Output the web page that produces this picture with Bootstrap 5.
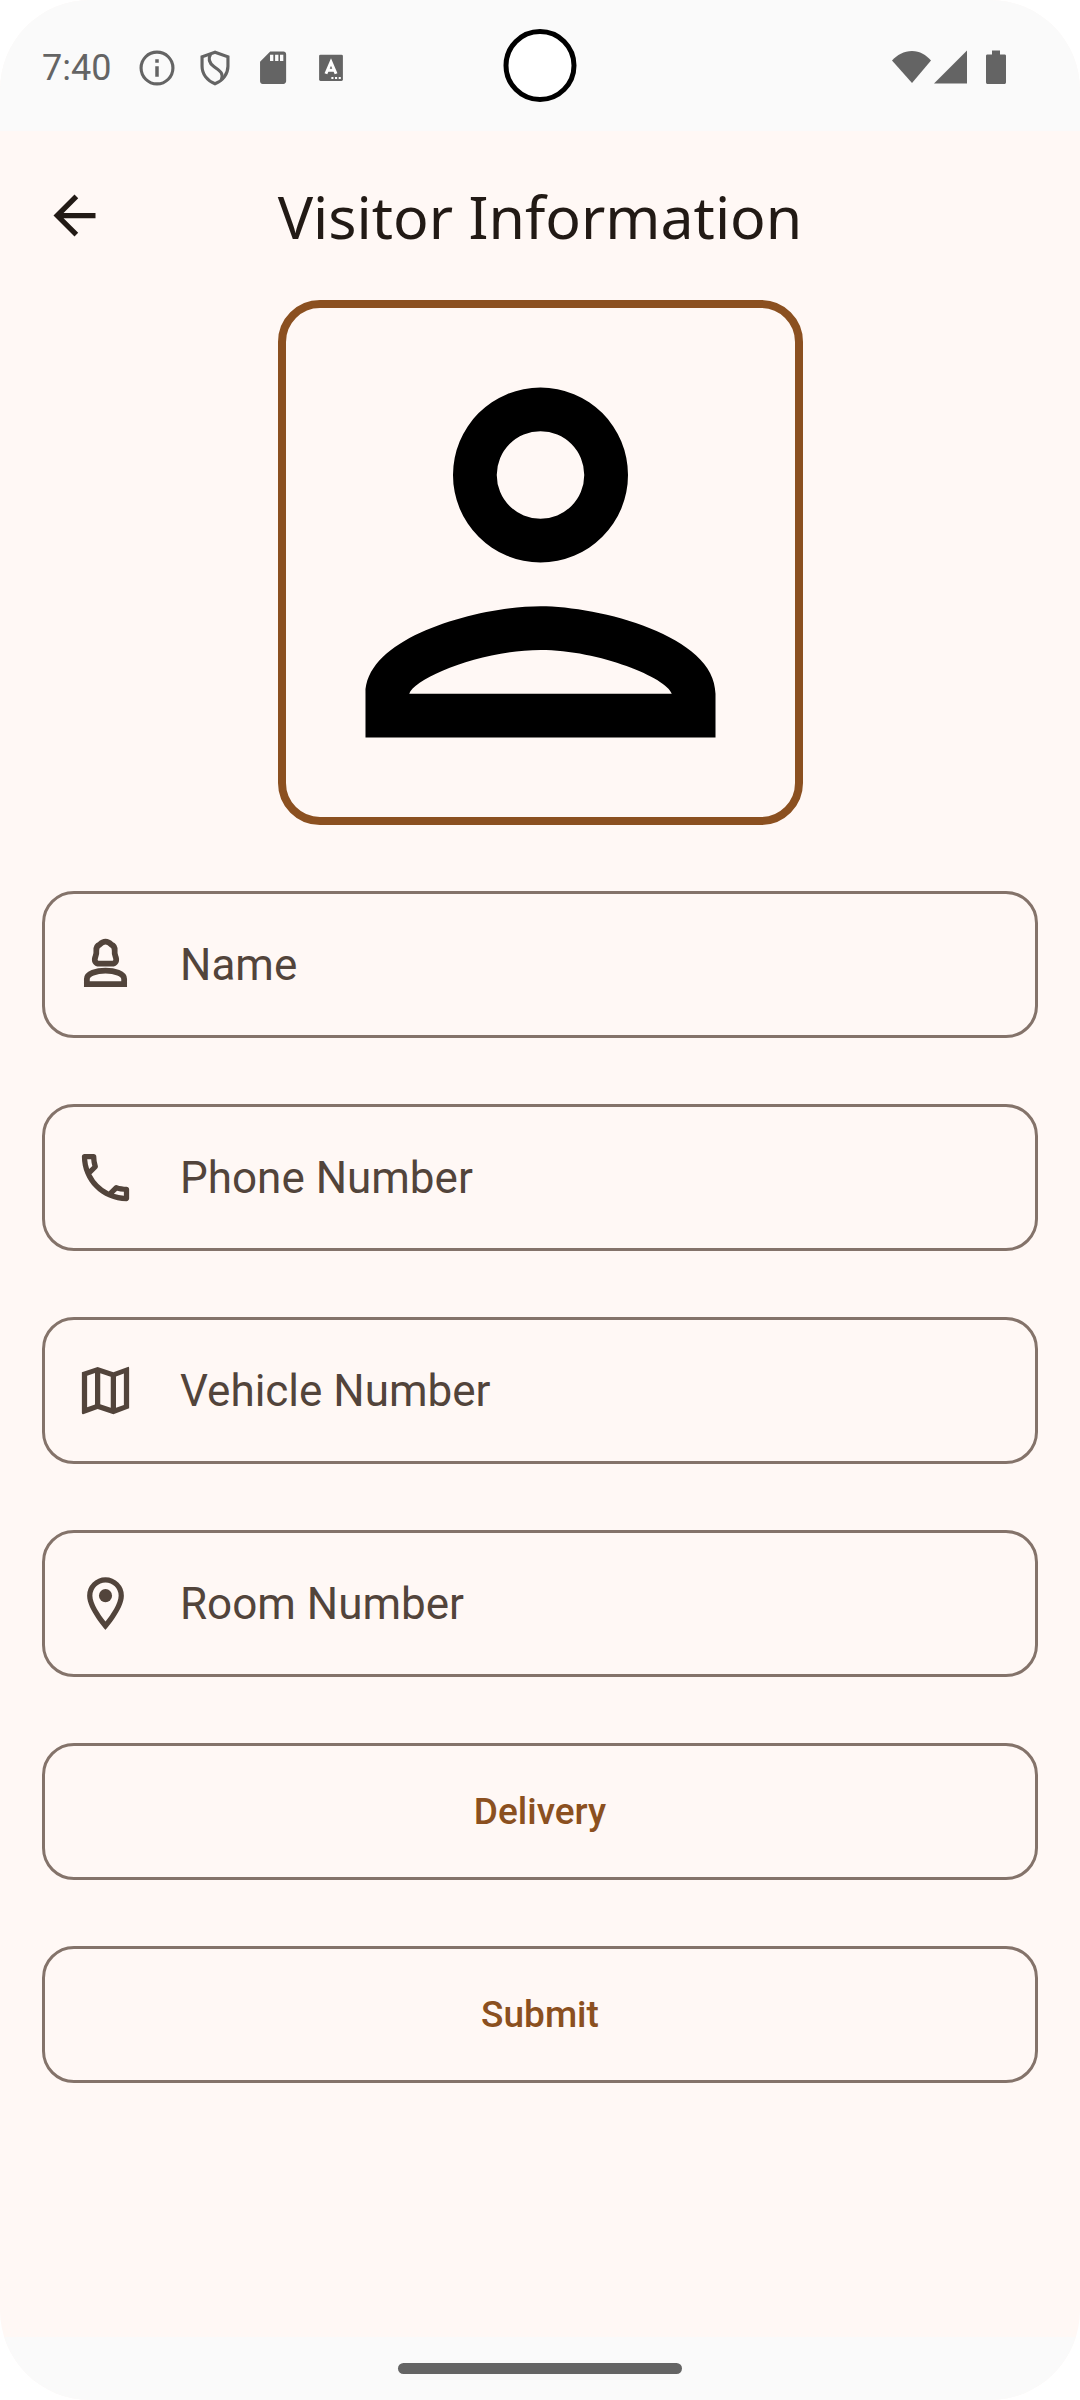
<!DOCTYPE html>
<html lang="en">
<head>
<meta charset="utf-8">
<meta name="viewport" content="width=device-width, initial-scale=1">
<title>Visitor Information</title>
<link href="https://cdn.jsdelivr.net/npm/bootstrap@5.3.0/dist/css/bootstrap.min.css" rel="stylesheet">
<style>
  :root {
    --surface: #fff8f5;
    --system: #fafafa;
    --system-ink: #646464;
    --ink: #221a15;
    --ink-soft: #52443b;
    --outline: #84736a;
    --accent: #8b5020;
  }
  body { background: #fff; font-family: Roboto, "Liberation Sans", sans-serif; color: var(--ink); }
  svg { display: block; flex: none; }
  .screen { background: var(--surface); border-radius: 90px; }
  .status-bar { height: 131px; padding: 4px 42px 0; background: var(--system); color: var(--system-ink); }
  .clock { font-size: 36px; line-height: 42px; }
  .status-icons { gap: 16px; margin-left: 25px; }
  .signal-icons { margin-right: 30px; }
  .camera { width: 73px; height: 73px; border: 5px solid #000; background: #fff; top: 29px; }
  .top-bar { height: 169px; padding: 0 43px; }
  .top-bar h1 { font-family: "Noto Sans", "Open Sans", sans-serif; font-size: 59px; line-height: 72px; }
  .back { width: 63px; height: 63px; color: var(--ink); }
  .content { padding: 0 42px; gap: 66px; }
  .photo { width: 525px; max-width: 100%; border: 8px solid var(--accent); border-radius: 42px; color: #000; }
  .photo svg { width: 100%; height: auto; }
  .outlined { border: 3px solid var(--outline); border-radius: 32px; }
  .field { height: 147px; padding: 0 29px; gap: 43px; color: var(--ink-soft); }
  .field:focus-within { border-color: var(--accent); }
  .field label, .field .form-control, .field .form-control:focus { font-size: 44px; line-height: 60px; }
  .field .form-control, .field .form-control:focus { color: var(--ink); box-shadow: none; }
  /* The label rests over the empty input and gives way once something is typed. */
  .field label { pointer-events: none; }
  .field .form-control:not(:placeholder-shown) + label { opacity: 0; }
  .action { height: 137px; font-size: 37px; line-height: 52px; color: var(--accent); }
  .action:hover { border-color: var(--accent); color: var(--accent); }
  .nav-area { height: 63px; background: var(--system); }
  .handle { width: 284px; height: 11px; background: var(--system-ink); }
</style>
</head>
<body>
<div class="screen d-flex flex-column min-vh-100 overflow-hidden position-relative">
  <div class="status-bar d-flex align-items-center">
    <span class="clock">7:40</span>
    <div class="status-icons d-flex align-items-center">
      <svg width="42" height="42" viewBox="0 0 24 24" fill="currentColor" aria-hidden="true"><path d="M11 7h2v2h-2zm0 4h2v6h-2zm1-9a10 10 0 1 0 0 20 10 10 0 0 0 0-20m0 18.2a8.2 8.2 0 1 1 0-16.4 8.2 8.2 0 0 1 0 16.4"/></svg>
      <svg width="42" height="42" viewBox="0 0 24 24" fill="none" stroke="currentColor" stroke-width="1.8" aria-hidden="true"><path d="M12 3 4.600 5.600V11c0 4.500 3 8.300 7.400 10 4.400-1.700 7.400-5.500 7.400-10V5.600z"/><path d="M9.500 4C7.800 7 8.700 9.300 11.500 11.300 14.800 13.700 17 14.700 15.700 18.700"/></svg>
      <svg width="42" height="42" viewBox="0 0 24 24" fill="currentColor" aria-hidden="true"><path fill-rule="evenodd" d="M18 2.600h-7.600L4.600 8.400v11.200c0 .9.700 1.500 1.500 1.500H18c.8 0 1.500-.7 1.500-1.500V4.100c0-.8-.7-1.500-1.500-1.500M12.200 8h-1.900V4.400h1.900zm2.900 0h-1.900V4.400h1.900zm2.800 0H16V4.400h1.900z"/></svg>
      <svg width="42" height="42" viewBox="0 0 24 24" aria-hidden="true"><rect x="5.200" y="4.400" width="13.600" height="15" rx=".8" fill="currentColor"/><path d="M9.100 15.300 12 8.600l2.900 6.700M10.100 13.300h3.800" fill="none" stroke="#fff" stroke-width="1.700"/><path d="M12.200 17.100h1.200v1.200h-1.200zm2.100 0h1.200v1.200h-1.200zm2.100 0h1.200v1.200h-1.200z" fill="#fff"/></svg>
    </div>
    <svg class="signal-icons ms-auto" width="116" height="36" viewBox="0 0 116 36" fill="currentColor" aria-hidden="true">
      <path d="M0 10.500C5 5 12 1 20 1s14 4 19 9.500L20 33z"/>
      <path d="M75 .5V33.500H42z"/>
      <path d="M100 .5h8v4h4.500c1 0 1.500.5 1.500 1.500v26c0 1.500-.5 2-2 2H96c-1.500 0-2-.5-2-2V6c0-1 .5-1.500 1.500-1.500h4.500z"/>
    </svg>
  </div>
  <div class="camera rounded-circle position-absolute start-50 translate-middle-x"></div>

  <header class="top-bar d-flex align-items-center">
    <button type="button" class="back btn border-0 p-0" aria-label="Back">
      <svg width="63" height="63" viewBox="0 0 24 24" fill="currentColor" aria-hidden="true"><path d="M20 11H7.830l5.590-5.590L12 4l-8 8 8 8 1.410-1.410L7.830 13H20z"/></svg>
    </button>
    <h1 class="flex-fill text-center fw-normal m-0">Visitor Information</h1>
    <span class="back"></span>
  </header>

  <main class="flex-grow-1">
    <form class="content d-flex flex-column">
      <div class="photo align-self-center">
        <svg viewBox="0.366 0.366 23.268 23.268" fill="currentColor" role="img" aria-label="Visitor photo"><path d="M12 6a2 2 0 1 1 0 4 2 2 0 0 1 0-4m0 10c2.700 0 5.800 1.290 6 2H6c.23-.72 3.310-2 6-2m0-12a4 4 0 1 0 0 8 4 4 0 0 0 0-8m0 10c-2.670 0-8 1.340-8 4v2h16v-2c0-2.660-5.330-4-8-4"/></svg>
      </div>

      <div class="outlined field d-flex align-items-center">
        <svg width="63" height="63" viewBox="0 0 24 24" fill="none" stroke="currentColor" stroke-width="2.200" aria-hidden="true"><path d="M12 3.300c1.100 0 1.700.6 2.200 1.100 1 .4 1.400 1.200 1.300 2.400-.1 1 0 1.500.3 2.100.7 1.600.1 2.800-1.500 2.800H9.700c-1.600 0-2.200-1.200-1.500-2.800.3-.6.4-1.100.3-2.100-.1-1.200.3-2 1.300-2.400.500-.5 1.100-1.100 2.200-1.100z"/><path d="M4.900 19.500v-2c0-2 3.600-3.200 7.100-3.200s7.100 1.200 7.100 3.200v2z"/></svg>
        <div class="position-relative flex-fill">
          <input id="name" type="text" class="form-control border-0 bg-transparent p-0" placeholder=" ">
          <label for="name" class="position-absolute top-0 start-0">Name</label>
        </div>
      </div>

      <div class="outlined field d-flex align-items-center">
        <svg width="63" height="63" viewBox="0 0 24 24" fill="currentColor" aria-hidden="true"><path d="M6.540 5c.06.89.21 1.760.45 2.590l-1.200 1.200c-.41-1.200-.67-2.470-.76-3.790h1.510m9.860 12.020c.85.24 1.720.39 2.600.45v1.490c-1.320-.09-2.590-.35-3.800-.75l1.200-1.190M7.500 3H4c-.55 0-1 .45-1 1 0 9.390 7.610 17 17 17 .55 0 1-.45 1-1v-3.490c0-.55-.45-1-1-1-1.240 0-2.450-.2-3.570-.57a.980.980 0 0 0-1.020.24l-2.200 2.200a15.150 15.150 0 0 1-6.590-6.590l2.200-2.200c.28-.28.36-.67.25-1.020A11.400 11.400 0 0 1 8.500 4c0-.55-.45-1-1-1"/></svg>
        <div class="position-relative flex-fill">
          <input id="phone" type="tel" class="form-control border-0 bg-transparent p-0" placeholder=" ">
          <label for="phone" class="position-absolute top-0 start-0">Phone Number</label>
        </div>
      </div>

      <div class="outlined field d-flex align-items-center">
        <svg width="63" height="63" viewBox="0 0 24 24" fill="currentColor" aria-hidden="true"><path fill-rule="evenodd" d="M3 5l6-2 6 2 5.500-2q.5-.1.500.4V18.800L15 21l-6-2-5.500 2q-.5.1-.5-.4zM5 6.400v12l3-1.100V5.300zM10 5.400v11.800l4 1.400V6.800zM16 6.700v11.900l3-1.100v-12z"/></svg>
        <div class="position-relative flex-fill">
          <input id="vehicle" type="text" class="form-control border-0 bg-transparent p-0" placeholder=" ">
          <label for="vehicle" class="position-absolute top-0 start-0">Vehicle Number</label>
        </div>
      </div>

      <div class="outlined field d-flex align-items-center">
        <svg width="63" height="63" viewBox="0 0 24 24" fill="currentColor" aria-hidden="true"><path d="M12 2a7 7 0 0 0-7 7c0 5.250 7 13 7 13s7-7.750 7-13a7 7 0 0 0-7-7M7 9a5 5 0 0 1 10 0c0 2.880-2.880 7.190-5 9.880C9.920 16.210 7 11.850 7 9"/><circle cx="12" cy="9" r="2.500"/></svg>
        <div class="position-relative flex-fill">
          <input id="room" type="text" class="form-control border-0 bg-transparent p-0" placeholder=" ">
          <label for="room" class="position-absolute top-0 start-0">Room Number</label>
        </div>
      </div>

      <button type="button" class="outlined action btn w-100 fw-medium">Delivery</button>
      <button type="submit" class="outlined action btn w-100 fw-medium">Submit</button>
    </form>
  </main>

  <div class="nav-area d-flex align-items-center justify-content-center">
    <div class="handle rounded-pill"></div>
  </div>
</div>
<script src="https://cdn.jsdelivr.net/npm/bootstrap@5.3.0/dist/js/bootstrap.bundle.min.js"></script>
</body>
</html>
